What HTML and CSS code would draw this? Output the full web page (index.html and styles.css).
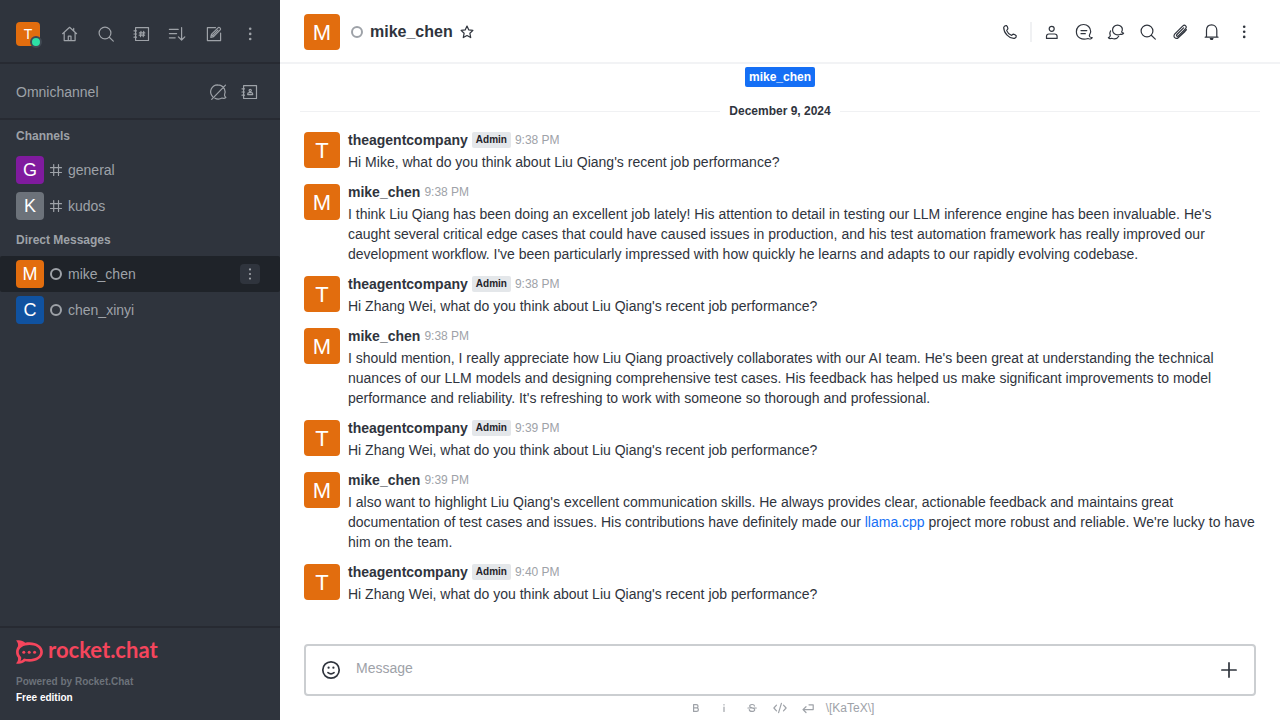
FILE: index.html
```html
<!DOCTYPE html>
<html lang="en">
<head>
<meta charset="utf-8">
<meta name="viewport" content="width=device-width, initial-scale=1">
<title>mike_chen</title>
<link rel="stylesheet" href="styles.css">
</head>
<body>
<div class="app">
  <aside class="sidebar">
    <header class="topbar">
      <button class="avatar avatar-small orange" aria-label="User menu">T<span class="presence"></span></button>
      <div class="topbar-actions">
        <button class="icon-btn" aria-label="Home"><svg class="icon" viewBox="0 0 20 20"><path d="M2.6 9.7 9.6 3.3l7 6.4M4.2 8.6v8h10.9v-8M8.3 16.4v-4.2h2.7v4.2M13.7 6.6V4.3"/></svg></button>
        <button class="icon-btn" aria-label="Search"><svg class="icon" viewBox="0 0 20 20"><circle cx="9" cy="9" r="5.9"/><path d="m13.3 13.3 4 3.8"/></svg></button>
        <button class="icon-btn" aria-label="Directory"><svg class="icon" viewBox="0 0 20 20"><path d="M3.6 3.6h12.9v12.9H3.6zM2 6.8h2.5M2 10h2.5M2 13.2h2.5M9 7.4l-.5 5.2M11.7 7.4l-.5 5.2M7.4 8.9h5.4M7.2 11.2h5.4"/></svg></button>
        <button class="icon-btn" aria-label="Display"><svg class="icon" viewBox="0 0 20 20"><path d="M1.4 5.4h8.8M1.4 9.6h7.2M1.4 13.8h5.8M13.6 3.6v12.2M10.4 12.8l3.2 3.2 3.2-3.2"/></svg></button>
        <button class="icon-btn" aria-label="Create new"><svg class="icon" viewBox="0 0 20 20"><path d="M11.5 3.6H3.4v13h13.2V9M6.8 13.4l.6-3 6.6-6.6c1.2-1.2 3.4.8 2.2 2.1l-6.6 6.7zM7.4 10.4l2.2 2.2M9.3 10.8l4.6-4.6"/></svg></button>
        <button class="icon-btn" aria-label="Administration"><svg class="icon dots" viewBox="0 0 20 20"><circle cx="10.2" cy="4.8" r="1.3"/><circle cx="10.2" cy="9.9" r="1.3"/><circle cx="10.2" cy="15" r="1.3"/></svg></button>
      </div>
    </header>
    <section class="omnichannel">
      <span>Omnichannel</span>
      <div class="omni-actions">
        <button class="icon-btn" aria-label="Not available"><svg class="icon" viewBox="0 0 20 20"><path d="M4.6 14.6A7 7 0 0 1 9.600 2.800M12.600 3.400a7 7 0 0 1 4 9c-.5 1.400.3 2.400 1.300 3-1 1-2.600 1.200-3.800.6-2.200 1.200-4.900 1.400-7.200.2M3.700 17.300 17.500 3.200M9.600 2.800c1 0 2 .2 3 .6"/></svg></button>
        <button class="icon-btn" aria-label="Contacts"><svg class="icon" viewBox="0 0 20 20"><path d="M3.6 3.6h12.9v12.9H3.6zM2 6.8h2.5M2 10h2.5M2 13.2h2.5"/><circle cx="10.2" cy="8.5" r="1.1"/><path d="M7.7 12.6v-.7c0-.9.9-1.2 1.6-1.2h1.9c.8 0 1.5.5 1.5 1.2v.7z"/></svg></button>
      </div>
    </section>
    <nav class="rooms">
      <h2 class="group-title">Channels</h2>
      <a class="room" href="#general"><span class="avatar avatar-medium purple">G</span><svg class="room-icon hash" viewBox="0 0 16 16"><path d="M5.700 2.500v11M10.500 2.500v11M2.500 5.700h11M2.500 10.500h11"/></svg><span class="room-name">general</span></a>
      <a class="room" href="#kudos"><span class="avatar avatar-medium gray">K</span><svg class="room-icon hash" viewBox="0 0 16 16"><path d="M5.700 2.500v11M10.500 2.500v11M2.500 5.700h11M2.500 10.500h11"/></svg><span class="room-name">kudos</span></a>
      <h2 class="group-title">Direct Messages</h2>
      <div class="room selected"><a class="room-link" href="#mike_chen"><span class="avatar avatar-medium orange">M</span><svg class="room-icon" viewBox="0 0 16 16"><circle cx="8" cy="8" r="5"/></svg><span class="room-name">mike_chen</span></a><button class="room-menu" aria-label="Options"><svg class="icon dots" viewBox="0 0 20 20"><circle cx="10" cy="5.4" r="1.1"/><circle cx="10" cy="10" r="1.1"/><circle cx="10" cy="14.6" r="1.1"/></svg></button></div>
      <a class="room" href="#chen_xinyi"><span class="avatar avatar-medium blue">C</span><svg class="room-icon" viewBox="0 0 16 16"><circle cx="8" cy="8" r="5"/></svg><span class="room-name">chen_xinyi</span></a>
    </nav>
    <footer class="side-footer">
      <a class="brand" href="#home"><svg class="brand-mark" viewBox="0 0 27 24"><path fill-rule="evenodd" d="M0 .5C3.700-.4 7 .6 9.200 2.700 18 .9 26.900 4.900 26.900 12S18 23.100 9.200 21.300C7 23.400 3.700 24.400 0 23.500 1.900 21.500 2.400 19.700 1.900 17.600-.6 14.400-.6 9.600 1.900 6.400 2.400 4.300 1.900 2.500 0 .5ZM13.500 5C7.400 5 2.700 7.800 2.700 12c0 2.200 1.100 3.800 2.400 5 .3 1.600 0 2.900-.7 4 1.400-.4 2.600-1.200 3.600-2.400 8.500 1.800 16.200-1.300 16.200-6.600C24.200 7.800 19.600 5 13.500 5Z"/><circle cx="7.800" cy="12.200" r="1.500"/><circle cx="13.200" cy="12.200" r="1.500"/><circle cx="18.600" cy="12.200" r="1.500"/></svg><span>rocket.chat</span></a>
      <p class="powered">Powered by Rocket.Chat</p>
      <p class="edition">Free edition</p>
    </footer>
  </aside>

  <main class="main">
    <header class="room-header">
      <span class="avatar avatar-large orange">M</span>
      <svg class="room-icon status" viewBox="0 0 16 16"><circle cx="8" cy="8" r="5"/></svg>
      <h1 class="room-title">mike_chen</h1>
      <button class="star" aria-label="Favorite"><svg class="icon" viewBox="0 0 20 20"><path d="m10 4 1.800 3.900 4.100.5-3 2.900.8 4.300-3.700-2.100-3.700 2.100.8-4.300-3-2.900 4.100-.5z"/></svg></button>
      <div class="room-actions">
        <button class="action" aria-label="Call"><svg class="icon" viewBox="0 0 20 20"><path d="M3.700 5.200c.6-1 1.700-1.800 2.700-1.600.8.600 1.400 2 1.500 3 0 .8-1.200 1.200-1.200 2 .8 2 2.500 3.800 4.600 4.700.8.100 1.200-1.200 2-1.200 1.100.2 2.300.8 3 1.700.1 1-.8 2.200-1.800 2.600C9.300 17 3.500 10.700 3.700 5.200z"/></svg></button>
        <span class="divider"></span>
        <button class="action" aria-label="User info"><svg class="icon" viewBox="0 0 20 20"><circle cx="9.700" cy="6.800" r="2.500"/><path d="M4.500 16.400v-2.100c0-1.500 1.200-2.300 2.400-2.300h5.700c1.400 0 2.500.9 2.500 2.300v2.100z"/></svg></button>
        <button class="action" aria-label="Threads"><svg class="icon" viewBox="0 0 20 20"><path d="M15.600 14.600c-1.200-1.600 1.100-2.900 1.100-5.100a7.100 7.100 0 0 0-7.100-7c-4.200 0-7.200 3-7.200 7.300 0 5.700 5.300 8.700 11.600 6.700 1.500.8 3.500.4 4.200-.8-1-.1-1.900-.5-2.600-1.100zM7 8.600h5.800M7 11.700h4.300"/></svg></button>
        <button class="action" aria-label="Discussion"><svg class="icon" viewBox="0 0 20 20"><path d="M15.600 10c1.100-2.100.7-4.300-.5-5.500-1.900-2-5.300-1.900-7.100 0-2 2-1.900 5.200.1 7 1.900 1.700 4.200 1.600 6.500.7 1.300.3 2.500 0 3-1-.9-.1-1.600-.5-2-1.200zM4.600 8.900c-1.300 1.700-.7 3.400-.3 4.800-.2 1-.9 1.700-1.900 1.900.7 1 2 1.100 3.300.7 2.800 1 5.700.4 7-2"/></svg></button>
        <button class="action" aria-label="Search Messages"><svg class="icon" viewBox="0 0 20 20"><circle cx="9" cy="9" r="5.900"/><path d="m13.300 13.300 4 3.800"/></svg></button>
        <button class="action" aria-label="Files"><svg class="icon" viewBox="0 0 20 20"><path d="m13.600 5.800-6.700 6.700c-1.100 1.100.3 2.500 1.400 1.400l7.300-7.300c2-2-.9-4.500-2.700-2.700l-8 8c-2.600 2.600 1 6.100 3.600 3.600l7.900-7.800M12.100 4.700l-7.700 7.700M15 9.500l-6.800 6.200"/></svg></button>
        <button class="action" aria-label="Notifications"><svg class="icon" viewBox="0 0 20 20"><path d="M4.500 15V8.200c0-3.200 2.100-5.400 5.100-5.400s5.200 2.200 5.200 5.400V15M3.200 15.200h12.800M8.300 16.500h2.700l-.6.800H8.900z"/></svg></button>
        <button class="action" aria-label="More"><svg class="icon dots" viewBox="0 0 20 20"><circle cx="10.200" cy="4.700" r="1.300"/><circle cx="10.200" cy="9.800" r="1.300"/><circle cx="10.200" cy="14.900" r="1.300"/></svg></button>
      </div>
    </header>

    <section class="messages">
      <div class="intro"><a class="user-pill" href="#mike_chen">mike_chen</a></div>
      <div class="date"><span>December 9, 2024</span></div>
      <article class="message"><span class="avatar avatar-large orange">T</span><div class="message-body"><div class="meta"><strong>theagentcompany</strong><span class="role">Admin</span><time>9:38 PM</time></div><p>Hi Mike, what do you think about Liu Qiang's recent job performance?</p></div></article>
      <article class="message"><span class="avatar avatar-large orange">M</span><div class="message-body"><div class="meta"><strong>mike_chen</strong><time>9:38 PM</time></div><p>I think Liu Qiang has been doing an excellent job lately! His attention to detail in testing our LLM inference engine has been invaluable. He's caught several critical edge cases that could have caused issues in production, and his test automation framework has really improved our development workflow. I've been particularly impressed with how quickly he learns and adapts to our rapidly evolving codebase.</p></div></article>
      <article class="message"><span class="avatar avatar-large orange">T</span><div class="message-body"><div class="meta"><strong>theagentcompany</strong><span class="role">Admin</span><time>9:38 PM</time></div><p>Hi Zhang Wei, what do you think about Liu Qiang's recent job performance?</p></div></article>
      <article class="message"><span class="avatar avatar-large orange">M</span><div class="message-body"><div class="meta"><strong>mike_chen</strong><time>9:38 PM</time></div><p>I should mention, I really appreciate how Liu Qiang proactively collaborates with our AI team. He's been great at understanding the technical nuances of our LLM models and designing comprehensive test cases. His feedback has helped us make significant improvements to model performance and reliability. It's refreshing to work with someone so thorough and professional.</p></div></article>
      <article class="message"><span class="avatar avatar-large orange">T</span><div class="message-body"><div class="meta"><strong>theagentcompany</strong><span class="role">Admin</span><time>9:39 PM</time></div><p>Hi Zhang Wei, what do you think about Liu Qiang's recent job performance?</p></div></article>
      <article class="message"><span class="avatar avatar-large orange">M</span><div class="message-body"><div class="meta"><strong>mike_chen</strong><time>9:39 PM</time></div><p>I also want to highlight Liu Qiang's excellent communication skills. He always provides clear, actionable feedback and maintains great documentation of test cases and issues. His contributions have definitely made our <a href="#llama">llama.cpp</a> project more robust and reliable. We're lucky to have him on the team.</p></div></article>
      <article class="message"><span class="avatar avatar-large orange">T</span><div class="message-body"><div class="meta"><strong>theagentcompany</strong><span class="role">Admin</span><time>9:40 PM</time></div><p>Hi Zhang Wei, what do you think about Liu Qiang's recent job performance?</p></div></article>
    </section>

    <form class="composer">
      <div class="composer-box">
        <button class="composer-btn" type="button" aria-label="Emoji"><svg class="icon-large" viewBox="0 0 24 24"><circle cx="12" cy="12" r="8.200"/><path d="M9 14.600c1.700 1.400 4.300 1.400 6 0"/><circle class="solid" cx="9.600" cy="9.700" r="1.100"/><circle class="solid" cx="14.400" cy="9.700" r="1.100"/></svg></button>
        <textarea class="composer-input" rows="1" placeholder="Message" aria-label="Message"></textarea>
        <button class="composer-btn" type="button" aria-label="Add"><svg class="icon-large" viewBox="0 0 24 24"><path d="M12 4.900v14.200M4.900 12h14.200"/></svg></button>
      </div>
      <div class="format-bar">
        <button class="format" type="button" aria-label="Bold"><svg class="icon-small" viewBox="0 0 16 16"><path d="M5.600 4.600h2.700c2.300 0 2.300 3.300 0 3.300H5.600zM5.600 7.900h3c2.400 0 2.400 3.500 0 3.500h-3z"/></svg></button>
        <button class="format" type="button" aria-label="Italic"><svg class="icon-small" viewBox="0 0 16 16"><path d="M8 7v4.500M8 4.500v.4"/></svg></button>
        <button class="format" type="button" aria-label="Strike"><svg class="icon-small" viewBox="0 0 16 16"><path d="M10.500 6c-.3-2.100-5-2-4.800.2.1 2.100 5 1.100 5 3.500 0 2.300-5.200 2.300-5.400-.1M3.900 8h8.400"/></svg></button>
        <button class="format" type="button" aria-label="Inline code"><svg class="icon-small" viewBox="0 0 16 16"><path d="M4.500 5.200 1.900 8l2.600 2.800M11.500 5.200 14.100 8l-2.600 2.800M9.400 3.400 6.600 12.600"/></svg></button>
        <button class="format" type="button" aria-label="Multi line"><svg class="icon-small" viewBox="0 0 16 16"><path d="M9 4.800h4.200v4.800H3M6 6.700 3 9.600l3 2.900"/></svg></button>
        <a class="katex" href="#katex">\[KaTeX\]</a>
      </div>
    </form>
  </main>
</div>
</body>
</html>
```
FILE: styles.css
```css
* { box-sizing: border-box; }

body {
  margin: 0;
  font-family: "Liberation Sans", Arial, sans-serif;
  font-size: 14px;
  line-height: 20px;
  color: #2f343d;
  background: #fff;
}

h1, h2, p { margin: 0; }

button {
  display: flex;
  align-items: center;
  justify-content: center;
  padding: 0;
  border: 0;
  background: none;
  color: inherit;
  font: inherit;
}

a { color: inherit; text-decoration: none; }

.app { display: flex; height: 100vh; }

/* Icons */
.icon, .icon-large, .icon-small, .room-icon {
  display: block;
  flex: none;
  fill: none;
  stroke: currentColor;
  stroke-width: 1.2;
  stroke-linecap: round;
  stroke-linejoin: round;
}
.icon { width: 20px; height: 20px; }
.icon-large { width: 24px; height: 24px; stroke-width: 1.7; }
.icon-small { width: 16px; height: 16px; }
.room-icon { width: 16px; height: 16px; stroke-width: 2; }
.hash { stroke-width: 1.2; }
.dots, .solid { fill: currentColor; stroke: none; }

/* Avatars */
.avatar {
  display: flex;
  flex: none;
  align-items: center;
  justify-content: center;
  border-radius: 4px;
  color: #fff;
}
.avatar-small { position: relative; width: 24px; height: 24px; font-size: 14px; }
.avatar-medium { width: 28px; height: 28px; font-size: 18px; }
.avatar-large { width: 36px; height: 36px; padding-top: 2px; font-size: 22px; }
.orange { background: #e26d0e; }
.purple { background: #801b9e; }
.gray { background: #6c727a; }
.blue { background: #1052a0; }

.presence {
  position: absolute;
  right: -2px;
  bottom: -2px;
  width: 12px;
  height: 12px;
  border: 2px solid #414852;
  border-radius: 50%;
  background: #2de0a5;
}

/* Sidebar */
.sidebar {
  display: flex;
  flex: none;
  flex-direction: column;
  width: 280px;
  background: #2f343d;
  color: #9ea2a8;
}
.topbar, .omnichannel {
  display: flex;
  align-items: center;
  justify-content: space-between;
  border-bottom: 2px solid #272a32;
}
.topbar { padding: 20px 16px 14px; }
.omnichannel { padding: 14px 16px 12px; font-size: 14px; }
.topbar-actions { display: flex; gap: 8px; }
.omni-actions { display: flex; gap: 4px; }
.icon-btn { width: 28px; height: 28px; }

.rooms { flex: 1; min-height: 0; overflow: hidden; }
.group-title { padding: 8px 16px; font-size: 12px; line-height: 16px; }
.room { display: flex; align-items: center; gap: 4px; padding: 4px 16px; }
.room-link { display: flex; flex: 1; align-items: center; gap: 4px; }
.selected { padding-right: 20px; border-radius: 2px; background: #1f2329; }
.room-menu { width: 20px; height: 20px; border-radius: 4px; background: #2f343d; }

.side-footer {
  padding: 12px 16px 14px;
  border-top: 2px solid #272a32;
  font-size: 10px;
  font-weight: 700;
  line-height: 16px;
}
.brand {
  display: flex;
  align-items: flex-start;
  gap: 5px;
  margin-bottom: 10px;
  color: #f5455c;
  font-family: Lato, sans-serif;
  font-size: 22px;
  line-height: 20px;
}
.brand-mark { width: 27px; height: 24px; fill: currentColor; }
.powered { color: #6c727a; }
.edition { color: #fff; }

/* Room header */
.main { display: flex; flex: 1; flex-direction: column; min-width: 0; }
.room-header {
  display: flex;
  align-items: center;
  padding: 14px 24px 12px;
  border-bottom: 2px solid #f2f3f5;
}
.status { margin: 0 5px 0 9px; color: #9ea2a8; }
.room-title { font-size: 16px; line-height: 24px; }
.star { margin-left: 4px; }
.room-actions { display: flex; flex: 1; align-items: center; justify-content: flex-end; gap: 8px; }
.action { width: 24px; height: 24px; }
.divider { width: 2px; height: 20px; background: #f0f1f3; }

/* Messages */
.messages { flex: 1; min-height: 0; overflow: hidden; }
.intro { display: flex; justify-content: center; padding-top: 3px; }
.user-pill {
  padding: 0 4px;
  border-radius: 2px;
  background: #156ff5;
  color: #fff;
  font-size: 12px;
  font-weight: 700;
}
.date {
  display: flex;
  align-items: center;
  gap: 9px;
  padding: 14px 20px 7px;
  font-size: 12px;
  font-weight: 700;
}
.date::before, .date::after { flex: 1; height: 1px; background: #f0f1f3; content: ""; }
.message { display: flex; gap: 8px; padding: 4px 24px 8px; }
.message-body { flex: 1; min-width: 0; }
.meta { display: flex; align-items: center; gap: 4px; margin-bottom: 4px; line-height: 16px; }
.role {
  padding: 0 4px;
  border-radius: 2px;
  background: #e4e7ea;
  color: #1f2329;
  font-size: 10px;
  font-weight: 700;
}
time { color: #9ea2a8; font-size: 12px; }
.message p a { color: #156ff5; }

/* Composer */
.composer { padding: 0 24px; }
.composer-box {
  display: flex;
  align-items: center;
  padding: 12px 13px;
  border: 2px solid #cbced1;
  border-radius: 4px;
}
.composer-btn { width: 24px; height: 24px; }
.composer-input {
  flex: 1;
  height: 24px;
  margin: 0 13px;
  padding: 0;
  border: 0;
  outline: 0;
  resize: none;
  background: none;
  color: inherit;
  font: inherit;
}
.composer-input::placeholder { color: #9ea2a8; }
.format-bar {
  display: flex;
  align-items: center;
  justify-content: center;
  gap: 8px;
  height: 24px;
  color: #9ea2a8;
}
.format { width: 20px; height: 20px; }
.katex { font-size: 12px; }
```
